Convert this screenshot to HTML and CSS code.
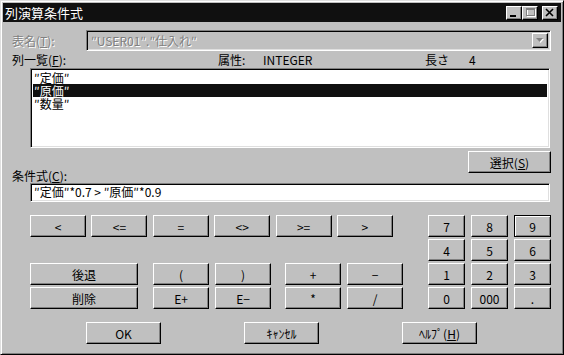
FILE: index.html
```html
<!DOCTYPE html>
<html lang="ja">
<head>
    <meta charset="UTF-8">
    <title>列演算条件式</title>
    <link rel="stylesheet" href="styles.css">
</head>
<body>
    <div class="window">
        <div class="titlebar">
            <span class="title">列演算条件式</span>
            <div class="controls">
                <span class="ctl">
                    <svg width="14" height="12" viewBox="0 0 14 12"><rect x="3" y="8" width="6" height="2" fill="#000"/></svg>
                </span>
                <span class="ctl">
                    <svg width="14" height="12" viewBox="0 0 14 12">
                        <rect x="4.5" y="2.5" width="8" height="7" fill="none" stroke="#fff"/>
                        <rect x="3.5" y="1.5" width="8" height="7" fill="none" stroke="#808080"/>
                        <rect x="3" y="1" width="9" height="2" fill="#808080"/>
                    </svg>
                </span>
                <span class="ctl close">
                    <svg width="14" height="12" viewBox="0 0 14 12">
                        <path d="M3 2 L10 9 M10 2 L3 9" stroke="#000" stroke-width="1.6"/>
                    </svg>
                </span>
            </div>
        </div>

        <div class="content">
            <div class="table-row">
                <span class="table-label disabled">表名(<u>T</u>):</span>
                <div class="combo">
                    <span class="disabled">″USER01″.″仕入れ″</span>
                    <span class="drop">
                        <svg width="14" height="13" viewBox="0 0 14 13">
                            <path d="M4 5 H11 L7.5 9 Z" fill="#fff"/>
                            <path d="M3 4 H10 L6.5 8 Z" fill="#808080"/>
                        </svg>
                    </span>
                </div>
            </div>

            <div class="list-head">
                <span class="list-label">列一覧(<u>F</u>):</span>
                <span class="attr">属性:</span>
                <span class="attr-val">INTEGER</span>
                <span class="len">長さ</span>
                <span>4</span>
            </div>

            <div class="listbox">
                <div class="item">″定価″</div>
                <div class="item selected">″原価″</div>
                <div class="item">″数量″</div>
            </div>

            <div class="cond-head">
                <span class="cond-label">条件式(<u>C</u>):</span>
                <button class="btn select-btn">選択(<u>S</u>)</button>
            </div>

            <div class="expr">″定価″*0.7 &gt; ″原価″*0.9</div>

            <div class="pad">
                <div class="ops">
                    <div class="ops-top">
                        <button class="btn">&lt;</button>
                        <button class="btn">&lt;=</button>
                        <button class="btn">=</button>
                        <button class="btn">&lt;&gt;</button>
                        <button class="btn">&gt;=</button>
                        <button class="btn">&gt;</button>
                    </div>
                    <div class="ops-row first">
                        <button class="btn wide">後退</button>
                        <div class="grp">
                            <button class="btn">(</button>
                            <button class="btn">)</button>
                        </div>
                        <div class="grp">
                            <button class="btn">+</button>
                            <button class="btn">−</button>
                        </div>
                    </div>
                    <div class="ops-row">
                        <button class="btn wide">削除</button>
                        <div class="grp">
                            <button class="btn">E+</button>
                            <button class="btn">E−</button>
                        </div>
                        <div class="grp">
                            <button class="btn">*</button>
                            <button class="btn">/</button>
                        </div>
                    </div>
                </div>

                <div class="numpad">
                    <button class="btn">7</button>
                    <button class="btn">8</button>
                    <button class="btn default">9</button>
                    <button class="btn">4</button>
                    <button class="btn">5</button>
                    <button class="btn">6</button>
                    <button class="btn">1</button>
                    <button class="btn">2</button>
                    <button class="btn">3</button>
                    <button class="btn">0</button>
                    <button class="btn">000</button>
                    <button class="btn">.</button>
                </div>
            </div>

            <div class="actions">
                <button class="btn action">OK</button>
                <button class="btn action">ｷｬﾝｾﾙ</button>
                <button class="btn action">ﾍﾙﾌﾟ(<u>H</u>)</button>
            </div>
        </div>
    </div>
</body>
</html>
```

FILE: styles.css
```css
body {
    margin: 0;
    background-color: #c0c0c0;
    font-family: "Noto Sans CJK JP", "DejaVu Sans", sans-serif;
    font-size: 12px;
    color: #000;
}

.window {
    width: 564px;
    height: 355px;
    box-sizing: border-box;
    padding: 2px;
    border: 1px solid;
    border-color: #dfdfdf #000 #000 #dfdfdf;
    box-shadow: inset 1px 1px #fff, inset -1px -1px #808080;
    background-color: #c0c0c0;
}

.titlebar {
    height: 19px;
    display: flex;
    align-items: center;
    justify-content: space-between;
    padding: 0 3px 0 2px;
    background-color: #101010;
    color: #fff;
}

.title {
    font-size: 13px;
    line-height: 19px;
}

.controls {
    display: flex;
    align-items: center;
}

.ctl {
    width: 16px;
    height: 14px;
    box-sizing: border-box;
    display: flex;
    background-color: #c0c0c0;
    border: 1px solid;
    border-color: #fff #000 #000 #fff;
    box-shadow: inset -1px -1px #808080;
}

.ctl.close {
    margin-left: 4px;
}

.content {
    padding: 8px 10px 0 9px;
}

.disabled {
    color: #808080;
    text-shadow: 1px 1px #fff;
}

.table-row {
    display: flex;
    align-items: center;
    height: 21px;
}

.table-label {
    width: 74px;
}

.combo,
.listbox,
.expr {
    box-sizing: border-box;
    border: 1px solid;
    border-color: #808080 #fff #fff #808080;
    box-shadow: inset 1px 1px #000, inset -1px -1px #dfdfdf;
}

.combo {
    flex: 1;
    height: 21px;
    display: flex;
    align-items: center;
    justify-content: space-between;
    padding: 2px 2px 2px 4px;
    background-color: #c0c0c0;
}

.drop {
    width: 16px;
    height: 15px;
    box-sizing: border-box;
    display: flex;
    border: 1px solid;
    border-color: #fff #000 #000 #fff;
    box-shadow: inset -1px -1px #808080;
}

.list-head {
    display: flex;
    align-items: center;
    height: 17px;
}

.list-label {
    width: 206px;
}

.attr {
    width: 45px;
}

.attr-val {
    width: 162px;
}

.len {
    width: 44px;
}

.listbox {
    width: 520px;
    height: 80px;
    margin-left: 18px;
    padding: 2px 2px 0;
    background-color: #fff;
}

.item {
    height: 13px;
    line-height: 13px;
    padding-left: 1px;
}

.item.selected {
    background-color: #101010;
    color: #fff;
}

.cond-head {
    display: flex;
    justify-content: space-between;
    height: 35px;
}

.cond-label {
    align-self: flex-end;
    line-height: 15px;
}

.btn {
    height: 22px;
    box-sizing: border-box;
    padding: 0;
    background-color: #c0c0c0;
    border: 1px solid;
    border-color: #fff #000 #000 #fff;
    box-shadow: inset -1px -1px #808080;
    font: inherit;
    color: #000;
}

.btn.default {
    border-color: #000;
    box-shadow: inset 1px 1px #fff, inset -1px -1px #808080;
}

.select-btn {
    width: 83px;
    margin-top: 3px;
}

.expr {
    width: 520px;
    height: 19px;
    margin-left: 18px;
    padding: 0 3px;
    line-height: 15px;
    background-color: #fff;
}

.pad {
    display: flex;
    margin: 13px 0 0 18px;
}

.ops {
    width: 373px;
}

.ops-top {
    display: grid;
    grid-template-columns: repeat(6, 56px);
    column-gap: 5.4px;
}

.ops-row {
    display: flex;
    margin-top: 2px;
}

.ops-row.first {
    margin-top: 26px;
}

.ops-row .btn {
    width: 56px;
}

.ops-row .btn.wide {
    width: 108px;
    margin-right: 15px;
}

.grp {
    display: flex;
    gap: 6px;
}

.grp + .grp {
    margin-left: 14px;
}

.numpad {
    display: grid;
    grid-template-columns: repeat(3, 37px);
    grid-auto-rows: 22px;
    gap: 2px 6px;
    margin-left: 25px;
}

.actions {
    display: flex;
    gap: 83px;
    margin: 13px 0 0 74px;
}

.action {
    width: 75px;
}
```
